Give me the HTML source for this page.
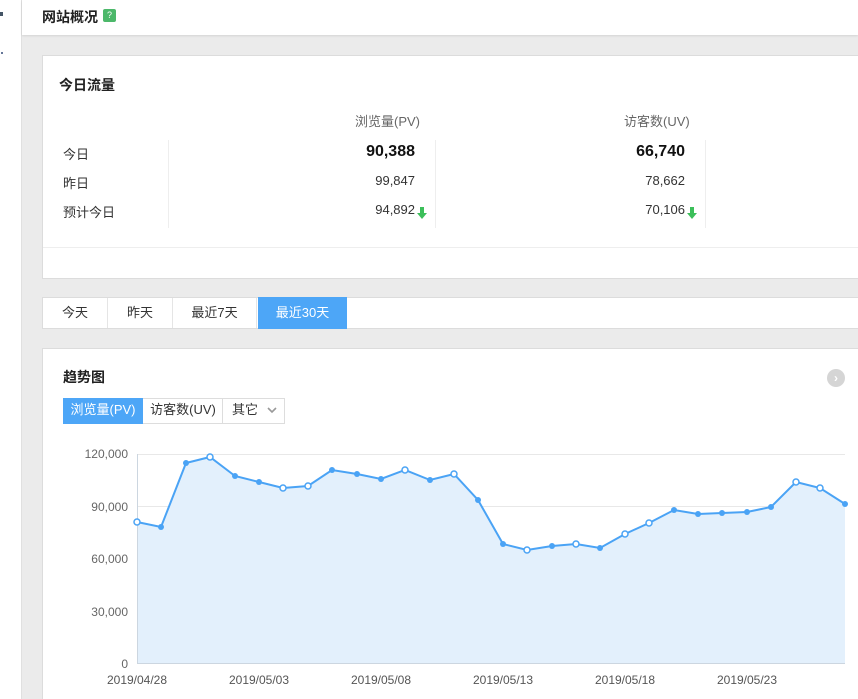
<!DOCTYPE html>
<html><head><meta charset="utf-8"><style>
*{margin:0;padding:0;box-sizing:border-box}
html,body{width:858px;height:699px;overflow:hidden}
body{background:#ebebeb;font-family:"Liberation Sans","Noto Sans CJK SC",sans-serif;color:#333;font-size:13px;position:relative}
.abs{position:absolute}
.side{left:0;top:0;width:22px;height:699px;background:#fff;border-right:1px solid #e0e0e0}
.head{left:22px;top:0;width:836px;height:35px;background:#fff;box-shadow:0 1px 2px rgba(0,0,0,.1)}
.card{background:#fff;border:1px solid #dcdcdc}
.t{white-space:nowrap}
</style></head><body>
<div class="abs side"><div class="abs" style="left:0;top:12px;width:3px;height:4px;background:#456"></div><div class="abs" style="left:1px;top:52px;width:2px;height:2px;background:#679"></div></div>
<div class="abs head">
<div class="abs t" style="left:20px;top:7px;font-size:14px;font-weight:bold;color:#222">网站概况</div>
<div class="abs" style="left:81px;top:9px;width:13px;height:13px;background:#4cb86a;border-radius:2px;color:#fff;font-size:9px;text-align:center;line-height:13px">?</div>
</div>
<div class="abs card" style="left:42px;top:55px;width:820px;height:224px">
<div class="abs t" style="left:16px;top:19px;font-size:14px;font-weight:bold;color:#222">今日流量</div>
<div class="abs t" style="left:312px;top:55px;color:#666">浏览量(PV)</div>
<div class="abs t" style="left:581px;top:55px;color:#666">访客数(UV)</div>
<div class="abs" style="left:125px;top:84px;width:1px;height:88px;background:#eee"></div>
<div class="abs" style="left:392px;top:84px;width:1px;height:88px;background:#eee"></div>
<div class="abs" style="left:662px;top:84px;width:1px;height:88px;background:#eee"></div>
<div class="abs t" style="left:20px;top:88px">今日</div>
<div class="abs t" style="left:20px;top:117px">昨日</div>
<div class="abs t" style="left:20px;top:146px">预计今日</div>
<div class="abs t" style="right:446px;top:87px;font-size:16px;font-weight:bold;color:#111">90,388</div>
<div class="abs t" style="right:446px;top:117px">99,847</div>
<div class="abs t" style="right:446px;top:146px">94,892</div>
<div class="abs t" style="right:176px;top:87px;font-size:16px;font-weight:bold;color:#111">66,740</div>
<div class="abs t" style="right:176px;top:117px">78,662</div>
<div class="abs t" style="right:176px;top:146px">70,106</div>
<svg class="abs" style="left:374px;top:151px" width="10" height="12"><path d="M3 0h4v6h3l-5 6-5-6h3z" fill="#3cbf5a"/></svg>
<svg class="abs" style="left:644px;top:151px" width="10" height="12"><path d="M3 0h4v6h3l-5 6-5-6h3z" fill="#3cbf5a"/></svg>
<div class="abs" style="left:0;top:191px;width:820px;height:1px;background:#eee"></div>
</div>
<div class="abs card" style="left:42px;top:297px;width:820px;height:32px">
<div class="abs t" style="left:0;top:0;width:65px;height:30px;line-height:29px;text-align:center;border-right:1px solid #e5e5e5">今天</div>
<div class="abs t" style="left:65px;top:0;width:65px;height:30px;line-height:29px;text-align:center;border-right:1px solid #e5e5e5">昨天</div>
<div class="abs t" style="left:130px;top:0;width:84px;height:30px;line-height:29px;text-align:center;border-right:1px solid #e5e5e5">最近7天</div>
<div class="abs t" style="left:215px;top:-1px;width:89px;height:32px;line-height:31px;text-align:center;background:#4da6f7;color:#fff">最近30天</div>
</div>
<div class="abs card" style="left:42px;top:348px;width:820px;height:352px">
<div class="abs t" style="left:20px;top:18px;font-size:14px;font-weight:bold;color:#222">趋势图</div>
<div class="abs" style="left:784px;top:20px;width:18px;height:18px;border-radius:50%;background:#d5d5d5;color:#fff;font-size:12px;font-weight:bold;text-align:center;line-height:18px">›</div>
<div class="abs" style="left:20px;top:49px;width:222px;height:26px;border:1px solid #ddd"></div>
<div class="abs t" style="left:20px;top:49px;width:80px;height:26px;line-height:24px;text-align:center;background:#4da6f7;color:#fff">浏览量(PV)</div>
<div class="abs t" style="left:101px;top:49px;width:79px;height:26px;line-height:24px;text-align:center;border-right:1px solid #ddd">访客数(UV)</div>
<div class="abs t" style="left:189px;top:49px;height:26px;line-height:24px">其它</div>
<svg class="abs" style="left:224px;top:58px" width="10" height="8"><path d="M1 1l4 4 4-4" stroke="#999" stroke-width="1.6" fill="none"/></svg>
</div>
<svg class="abs" style="left:0;top:0" width="858" height="699">
<g stroke="#e8e8e8" stroke-width="1"><line x1="137" y1="454.5" x2="845" y2="454.5"/><line x1="137" y1="506.5" x2="845" y2="506.5"/><line x1="137" y1="558.5" x2="845" y2="558.5"/><line x1="137" y1="611.5" x2="845" y2="611.5"/></g>
<polygon fill="#e3f0fc" points="137,663 137,522 161,527 186,463 210,457 235,476 259,482 283,488 308,486 332,470 357,474 381,479 405,470 430,480 454,474 478,500 503,544 527,550 552,546 576,544 600,548 625,534 649,523 674,510 698,514 722,513 747,512 771,507 796,482 820,488 845,504 845,663"/>
<line x1="137.5" y1="454" x2="137.5" y2="663" stroke="#ccd6e0"/>
<line x1="137" y1="663.5" x2="845" y2="663.5" stroke="#ccd6e0"/>
<polyline fill="none" stroke="#4aa3f5" stroke-width="2" points="137,522 161,527 186,463 210,457 235,476 259,482 283,488 308,486 332,470 357,474 381,479 405,470 430,480 454,474 478,500 503,544 527,550 552,546 576,544 600,548 625,534 649,523 674,510 698,514 722,513 747,512 771,507 796,482 820,488 845,504"/>
<g fill="#fff" stroke="#4aa3f5" stroke-width="1.5">
<circle cx="137" cy="522" r="3"/><circle cx="210" cy="457" r="3"/><circle cx="283" cy="488" r="3"/><circle cx="308" cy="486" r="3"/><circle cx="405" cy="470" r="3"/><circle cx="454" cy="474" r="3"/><circle cx="527" cy="550" r="3"/><circle cx="576" cy="544" r="3"/><circle cx="625" cy="534" r="3"/><circle cx="649" cy="523" r="3"/><circle cx="796" cy="482" r="3"/><circle cx="820" cy="488" r="3"/>
</g>
<g fill="#4aa3f5">
<circle cx="161" cy="527" r="3"/><circle cx="186" cy="463" r="3"/><circle cx="235" cy="476" r="3"/><circle cx="259" cy="482" r="3"/><circle cx="332" cy="470" r="3"/><circle cx="357" cy="474" r="3"/><circle cx="381" cy="479" r="3"/><circle cx="430" cy="480" r="3"/><circle cx="478" cy="500" r="3"/><circle cx="503" cy="544" r="3"/><circle cx="552" cy="546" r="3"/><circle cx="600" cy="548" r="3"/><circle cx="674" cy="510" r="3"/><circle cx="698" cy="514" r="3"/><circle cx="722" cy="513" r="3"/><circle cx="747" cy="512" r="3"/><circle cx="771" cy="507" r="3"/><circle cx="845" cy="504" r="3"/>
</g>
<g font-family="Liberation Sans,sans-serif" font-size="12" fill="#666" text-anchor="end">
<text x="128" y="458">120,000</text><text x="128" y="511">90,000</text><text x="128" y="563">60,000</text><text x="128" y="616">30,000</text><text x="128" y="668">0</text>
</g>
<g font-family="Liberation Sans,sans-serif" font-size="12" fill="#555" text-anchor="middle">
<text x="137" y="684">2019/04/28</text><text x="259" y="684">2019/05/03</text><text x="381" y="684">2019/05/08</text><text x="503" y="684">2019/05/13</text><text x="625" y="684">2019/05/18</text><text x="747" y="684">2019/05/23</text>
</g>
</svg>
</body></html>
